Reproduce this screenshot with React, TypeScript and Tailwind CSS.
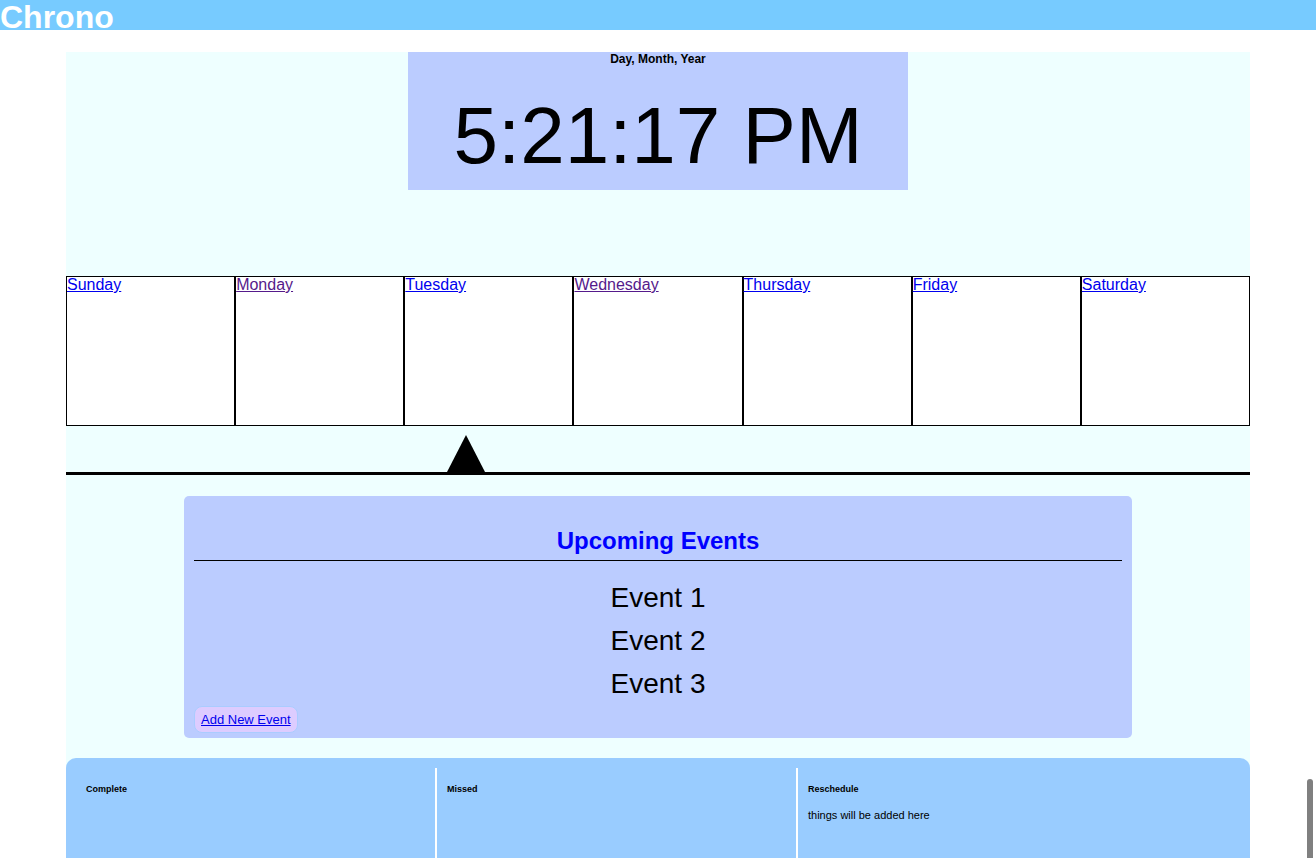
import React from "react";

const DAYS = [
  { name: "Sunday", visited: false },
  { name: "Monday", visited: true },
  { name: "Tuesday", visited: false },
  { name: "Wednesday", visited: true },
  { name: "Thursday", visited: false },
  { name: "Friday", visited: false },
  { name: "Saturday", visited: false },
];

const EVENTS = ["Event 1", "Event 2", "Event 3"];

const COLUMNS = [
  { title: "Complete", body: "" },
  { title: "Missed", body: "" },
  { title: "Reschedule", body: "things will be added here" },
];

export default function App() {
  return (
    <div className="relative min-h-screen bg-white font-['Liberation_Sans',Arial,sans-serif] text-black">
      {/* Header */}
      <header className="h-[30px] bg-[#77cbff]">
        <h1 className="pt-[1px] text-[32px] leading-[32px] font-bold text-white">Chrono</h1>
      </header>

      <main className="mx-auto mt-[22px] w-[1184px] bg-[#eeffff] pb-[60px]">
        {/* Clock */}
        <div className="mx-auto h-[138px] w-[500px] bg-[#bbccff] text-center">
          <div className="text-[12px] leading-[14px] font-bold">Day, Month, Year</div>
          <div className="mt-[24px] text-[80px] leading-[92px]">5:21:17 PM</div>
        </div>

        {/* Week */}
        <div className="mt-[86px] grid h-[150px] grid-cols-7">
          {DAYS.map((day) => (
            <div key={day.name} className="border border-black bg-white">
              <a
                href="#"
                className={`block text-[16px] leading-[16px] underline ${
                  day.visited ? "text-[#551a8b]" : "text-[#0000ee]"
                }`}
              >
                {day.name}
              </a>
            </div>
          ))}
        </div>

        {/* Today marker */}
        <div className="ml-[381px] mt-[9px] h-0 w-0 border-x-[19px] border-b-[37px] border-x-transparent border-b-black" />
        <div className="h-[3px] bg-black" />

        {/* Upcoming events */}
        <section className="mx-auto mt-[21px] w-[948px] rounded-[5px] bg-[#bbccff] px-[10px] pt-[30px] pb-[5px]">
          <h2 className="text-center text-[24px] leading-[29px] font-bold text-[#0000ff]">Upcoming Events</h2>
          <hr className="mt-[5px] border-t border-black" />
          <ul className="mt-[15px] text-center text-[28px] leading-[43px]">
            {EVENTS.map((e) => (
              <li key={e}>{e}</li>
            ))}
          </ul>
          <a
            href="#"
            className="mt-[1px] inline-block rounded-[8px] border border-[#aaccff] bg-[#ddccff] px-[6px] py-[4px] text-[13px] leading-[17px] text-[#0000ee] underline"
          >
            Add New Event
          </a>
        </section>

        {/* Status columns */}
        <section className="mt-[20px] flex h-[120px] rounded-t-[10px] bg-[#99ccff] p-[10px] pb-0">
          {COLUMNS.map((col, i) => (
            <div
              key={col.title}
              className={`px-[10px] pt-[16px] ${i > 0 ? "w-[361px] border-l-2 border-white" : "w-[359px]"}`}
            >
              <h5 className="text-[9px] leading-[11px] font-bold">{col.title}</h5>
              {col.body && <p className="mt-[14px] text-[11px] leading-[13px]">{col.body}</p>}
            </div>
          ))}
        </section>
      </main>

      {/* Overlay scrollbar thumb */}
      <div className="fixed right-[3px] top-[779px] h-[90px] w-[6px] rounded-full bg-[#808080]" />
    </div>
  );
}
